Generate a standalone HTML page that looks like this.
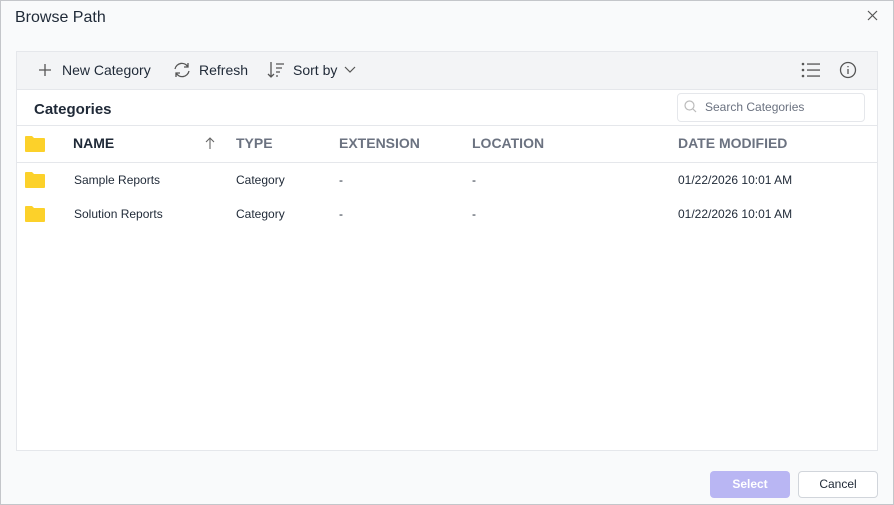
<!DOCTYPE html>
<html><head><style>
*{margin:0;padding:0;box-sizing:border-box}
body{width:894px;height:505px;background:#f9fafb;font-family:"Liberation Sans",Arial,sans-serif;position:relative;overflow:hidden}
.a{position:absolute;white-space:nowrap}
.t{font-size:13px;color:#1f2937}
.h{font-size:14px;font-weight:bold;color:#6b7280}
</style></head><body>
<div class="a" style="left:0;top:0;width:894px;height:505px;border:1px solid #c4c6ca"></div>
<div class="a" style="left:15px;top:9px;font-size:16px;color:#1f2937">Browse Path</div>
<svg class="a" style="left:867px;top:10px" width="11" height="11"><path d="M1 1L10 10M10 1L1 10" stroke="#555" stroke-width="1.2"/></svg>
<div class="a" style="left:16px;top:51px;width:862px;height:400px;background:#fff;border:1px solid #e5e7eb"></div>
<div class="a" style="left:17px;top:52px;width:860px;height:38px;background:#f3f4f6;border-bottom:1px solid #e5e7eb"></div>
<svg class="a" style="left:38px;top:63px" width="14" height="14"><path d="M7 1V13M1 7H13" stroke="#555" stroke-width="1.3"/></svg>
<div class="a t" style="left:62px;top:62px;font-size:14px">New Category</div>
<svg class="a" style="left:173px;top:61px" width="18" height="18" fill="none" stroke="#555" stroke-width="1.3"><path d="M2 8A7 7 0 0 1 15 6M16 10A7 7 0 0 1 3 12M15 2V6H11M3 16V12H7"/></svg>
<div class="a t" style="left:199px;top:62px;font-size:14px">Refresh</div>
<svg class="a" style="left:266px;top:60px" width="20" height="20" fill="none" stroke="#555" stroke-width="1.3"><path d="M5 2V17M2 14L5 17L8 14M10 4H18M10 8H16M10 12H14M10 16H12"/></svg>
<div class="a t" style="left:293px;top:62px;font-size:14px">Sort by</div>
<svg class="a" style="left:344px;top:66px" width="12" height="8"><path d="M1 1L6 6L11 1" stroke="#555" fill="none" stroke-width="1.2"/></svg>
<svg class="a" style="left:801px;top:61px" width="20" height="18" fill="#555"><circle cx="2" cy="3" r="1.3"/><circle cx="2" cy="9" r="1.3"/><circle cx="2" cy="15" r="1.3"/><rect x="6" y="2.4" width="13" height="1.3"/><rect x="6" y="8.4" width="13" height="1.3"/><rect x="6" y="14.4" width="13" height="1.3"/></svg>
<svg class="a" style="left:839px;top:61px" width="18" height="18" fill="none" stroke="#555" stroke-width="1.3"><circle cx="9" cy="9" r="7.5"/><path d="M9 8V13M9 5V6.3"/></svg>
<div class="a" style="left:34px;top:101px;font-size:15px;font-weight:bold;color:#1f2937">Categories</div>
<div class="a" style="left:677px;top:93px;width:188px;height:29px;background:#fff;border:1px solid #e5e7eb;border-radius:4px"></div>
<svg class="a" style="left:684px;top:100px" width="13" height="13" fill="none" stroke="#bbb" stroke-width="1.2"><circle cx="5.5" cy="5.5" r="4.5"/><path d="M9 9L12 12"/></svg>
<div class="a" style="left:705px;top:100px;font-size:12px;color:#6b7280">Search Categories</div>
<div class="a" style="left:17px;top:125px;width:860px;height:38px;border-top:1px solid #e5e7eb;border-bottom:1px solid #e5e7eb"></div>
<svg class="a" style="left:25px;top:136px" width="20" height="16"><path d="M0 1Q0 0 1 0H7L9 2H19Q20 2 20 3V15Q20 16 19 16H1Q0 16 0 15Z" fill="#fcd12a"/></svg>
<div class="a h" style="left:73px;top:135px;color:#1f2937">NAME</div>
<svg class="a" style="left:205px;top:137px" width="10" height="13"><path d="M5 12V1M1 5L5 1L9 5" stroke="#666" fill="none" stroke-width="1.1"/></svg>
<div class="a h" style="left:236px;top:135px">TYPE</div>
<div class="a h" style="left:339px;top:135px">EXTENSION</div>
<div class="a h" style="left:472px;top:135px">LOCATION</div>
<div class="a h" style="left:678px;top:135px">DATE MODIFIED</div>
<svg class="a" style="left:25px;top:172px" width="20" height="16"><path d="M0 1Q0 0 1 0H7L9 2H19Q20 2 20 3V15Q20 16 19 16H1Q0 16 0 15Z" fill="#fcd12a"/></svg>
<div class="a t" style="left:74px;top:173px;font-size:12px">Sample Reports</div>
<div class="a t" style="left:236px;top:173px;font-size:12px">Category</div>
<div class="a t" style="left:339px;top:173px;font-size:12px">-</div>
<div class="a t" style="left:472px;top:173px;font-size:12px">-</div>
<div class="a t" style="left:678px;top:173px;font-size:12px">01/22/2026 10:01 AM</div>
<svg class="a" style="left:25px;top:206px" width="20" height="16"><path d="M0 1Q0 0 1 0H7L9 2H19Q20 2 20 3V15Q20 16 19 16H1Q0 16 0 15Z" fill="#fcd12a"/></svg>
<div class="a t" style="left:74px;top:207px;font-size:12px">Solution Reports</div>
<div class="a t" style="left:236px;top:207px;font-size:12px">Category</div>
<div class="a t" style="left:339px;top:207px;font-size:12px">-</div>
<div class="a t" style="left:472px;top:207px;font-size:12px">-</div>
<div class="a t" style="left:678px;top:207px;font-size:12px">01/22/2026 10:01 AM</div>
<div class="a" style="left:710px;top:471px;width:80px;height:27px;background:#b9b6f3;border-radius:4px;color:#fff;font-size:12px;font-weight:bold;text-align:center;line-height:27px">Select</div>
<div class="a" style="left:798px;top:471px;width:80px;height:27px;background:#fff;border:1px solid #d1d5db;border-radius:4px;color:#1f2937;font-size:12px;text-align:center;line-height:25px">Cancel</div>
</body></html>
